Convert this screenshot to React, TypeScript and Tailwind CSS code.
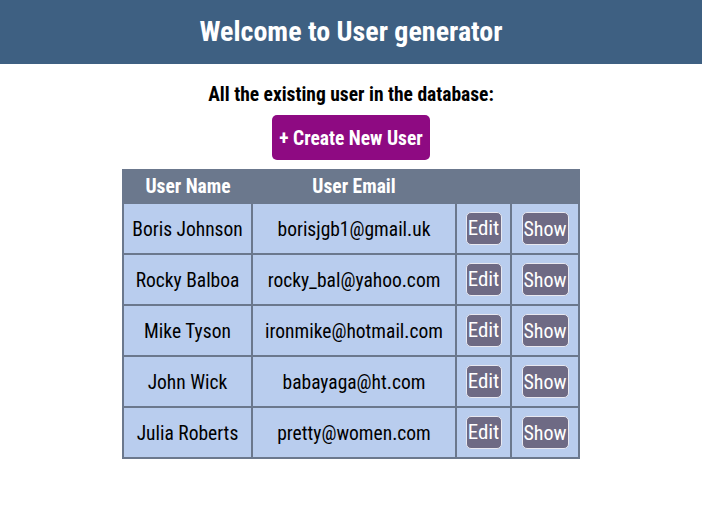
import React from "react";

const users = [
  { name: "Boris Johnson", email: "borisjgb1@gmail.uk" },
  { name: "Rocky Balboa", email: "rocky_bal@yahoo.com" },
  { name: "Mike Tyson", email: "ironmike@hotmail.com" },
  { name: "John Wick", email: "babayaga@ht.com" },
  { name: "Julia Roberts", email: "pretty@women.com" },
];

export default function App() {
  return (
    <div className="min-h-[511px] bg-white text-black font-stretch-condensed [font-family:'Roboto_Condensed','Noto_Sans',sans-serif]">
      <header className="flex h-16 items-center justify-center bg-[#3e6082]">
        <h1 className="text-[28px] font-bold leading-none text-white">Welcome to User generator</h1>
      </header>
      <div className="flex flex-col items-center">
        <p className="mt-[19px] whitespace-nowrap text-[19.5px] font-bold leading-6">All the existing user in the database:</p>
        <button className="mt-[8px] h-[45px] w-[158px] whitespace-nowrap rounded-[5px] bg-[#8e0a82] pt-[3px] text-[19.5px] font-bold text-white">
          + Create New User
        </button>
        <table className="mt-[9px] w-[456px] table-fixed border-collapse border-2 border-[#6b788d] text-center">
          <colgroup>
            <col className="w-[129px]" />
            <col className="w-[204px]" />
            <col className="w-[55px]" />
            <col className="w-[68px]" />
          </colgroup>
          <thead>
            <tr className="h-[33px] bg-[#6b788d] text-[19.5px] font-bold text-white">
              <th>User Name</th>
              <th>User Email</th>
              <th></th>
              <th></th>
            </tr>
          </thead>
          <tbody>
            {users.map((u) => (
              <tr key={u.name} className="h-[51px] bg-[#b9cdee] text-[19.5px]">
                <td className="whitespace-nowrap border-2 border-[#6b788d] pt-[3px]">{u.name}</td>
                <td className="whitespace-nowrap border-2 border-[#6b788d] pt-[3px]">{u.email}</td>
                <td className="border-2 border-[#6b788d]">
                  <button className="h-[33px] w-[36px] rounded-[5px] border border-[#e8e8f0] bg-[#6e6a84] text-[21px] text-white">
                    Edit
                  </button>
                </td>
                <td className="border-2 border-[#6b788d]">
                  <button className="h-[33px] w-[47px] rounded-[5px] border border-[#e8e8f0] bg-[#6e6a84] text-[20px] text-white">
                    Show
                  </button>
                </td>
              </tr>
            ))}
          </tbody>
        </table>
      </div>
    </div>
  );
}
